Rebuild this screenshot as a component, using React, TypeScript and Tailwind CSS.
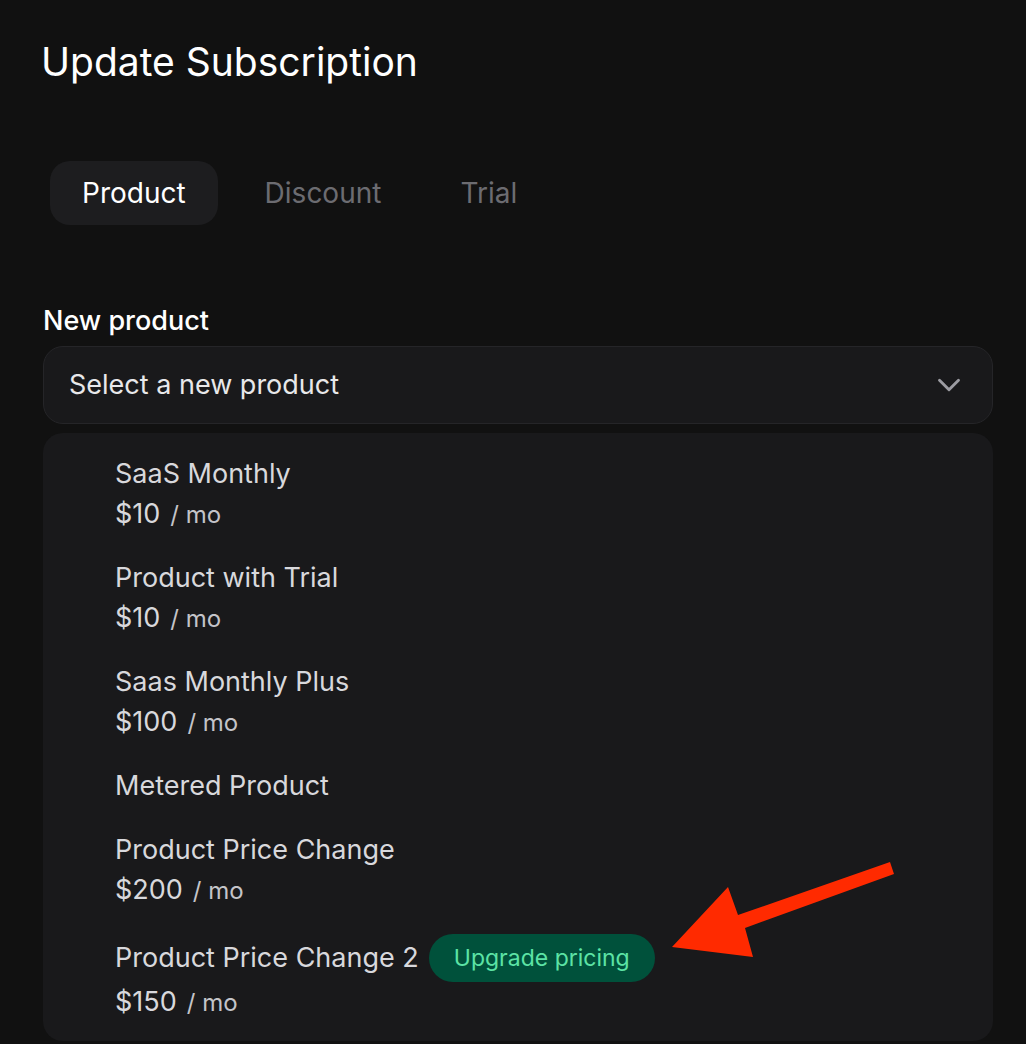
import { ChevronDown } from 'lucide-react';

// Product options shown in the open dropdown
interface ProductOption {
  name: string;
  price?: string;
  badge?: string;
}

const PRODUCTS: ProductOption[] = [
  { name: 'SaaS Monthly', price: '$10' },
  { name: 'Product with Trial', price: '$10' },
  { name: 'Saas Monthly Plus', price: '$100' },
  { name: 'Metered Product' },
  { name: 'Product Price Change', price: '$200' },
  { name: 'Product Price Change 2', price: '$150', badge: 'Upgrade pricing' },
];

const TABS = ['Product', 'Discount', 'Trial'];

function ProductRow({ product }: { product: ProductOption }) {
  return (
    <div className="py-[12px] pl-[72px]">
      <div className="flex min-h-[40px] items-center gap-[10px]">
        <span className="text-[27px] leading-[40px] text-[#d8d8dc]">{product.name}</span>
        {product.badge && (
          <span className="rounded-full bg-[#00513b] px-[25px] text-[23px] leading-[48px] text-[#5ce3a5]">
            {product.badge}
          </span>
        )}
      </div>
      {product.price && (
        <div className="flex h-[40px] items-baseline text-[#d8d8dc]">
          <span className="text-[27px] leading-[40px]">{product.price}</span>
          <span className="ml-[10px] text-[24px] leading-[40px] text-[#c4c4c9]">/ mo</span>
        </div>
      )}
    </div>
  );
}

export default function App() {
  return (
    <div
      className="relative h-[1044px] overflow-hidden bg-[#111111] pl-[43px] pr-[33px] pt-[38px]"
      style={{ fontFamily: 'Inter, "Noto Sans", sans-serif' }}
    >
      <h1 className="-ml-[2px] text-[39px] leading-[48px] text-white">Update Subscription</h1>

      <div className="mt-[75px] flex gap-[15px] pl-[7px]">
        {TABS.map((tab, i) => (
          <div
            key={tab}
            className={
              i === 0
                ? 'flex h-[64px] items-center rounded-[20px] bg-[#1d1d1f] px-[32px] text-[28px] text-white'
                : 'flex h-[64px] items-center rounded-[20px] px-[32px] text-[28px] text-[#6c6c71]'
            }
          >
            {tab}
          </div>
        ))}
      </div>

      <label className="mt-[80px] block text-[27px] font-medium leading-[32px] text-white">
        New product
      </label>

      <div className="mt-[9px] flex h-[78px] items-center justify-between rounded-[20px] border border-[#252528] bg-[#19191b] pl-[25px] pr-[24px]">
        <span className="text-[27px] text-[#e8e8ea]">Select a new product</span>
        <ChevronDown size={38} strokeWidth={1.8} className="text-[#9c9ca2]" />
      </div>

      <div className="mt-[9px] rounded-[20px] bg-[#19191b] pb-[7px] pt-[9px]">
        {PRODUCTS.map((p) => (
          <ProductRow key={p.name} product={p} />
        ))}
      </div>

      {/* annotation arrow pointing at the badge */}
      <svg className="pointer-events-none absolute left-0 top-0" width="1026" height="1044">
        <polygon
          points="890,862 894,874 745,928 753,957 672,947 728,887 738,915"
          fill="#ff2a00"
        />
      </svg>
    </div>
  );
}
